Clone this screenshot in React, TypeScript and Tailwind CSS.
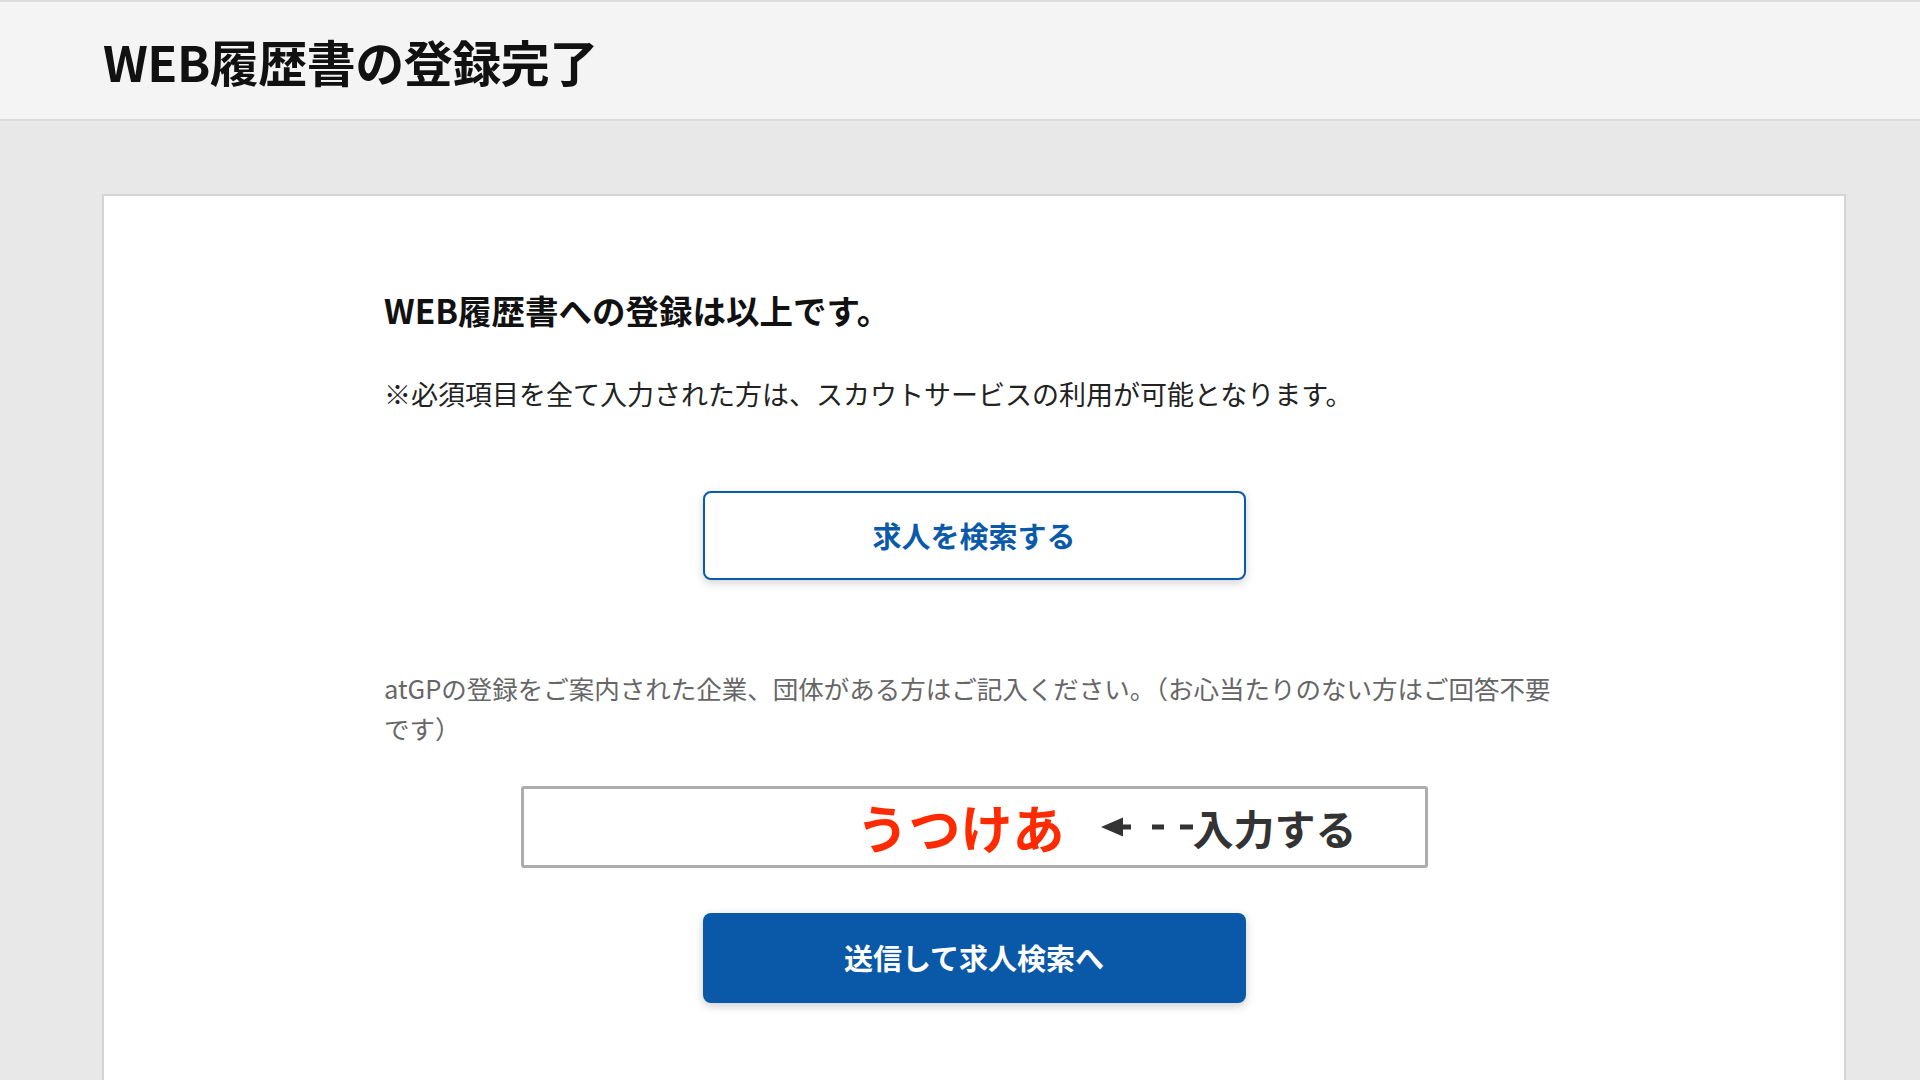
import React from 'react';

const font = { fontFamily: '"Noto Sans CJK JP", "Noto Sans", sans-serif' };

// dashed arrow used as the hand-written note next to the input
const DashedArrow: React.FC = () => (
  <svg width="92" height="20" viewBox="0 0 92 20" className="shrink-0">
    <path d="M0 10 L22 0.5 L22 19.5 Z" fill="#333" />
    <rect x="21" y="7.5" width="9" height="5" fill="#333" />
    <rect x="51" y="7.5" width="12" height="5" fill="#333" />
    <rect x="79" y="7.5" width="13" height="5" fill="#333" />
  </svg>
);

export default function App() {
  return (
    <div className="min-h-screen bg-[#e8e8e8]" style={font}>
      <header className="h-[121px] bg-[#f4f4f4] border-t-2 border-b-2 border-[#dcdcdc] flex items-center pl-[103px]">
        <h1 className="text-[49px] font-bold text-[#111] leading-none tracking-[-0.5px]">WEB履歴書の登録完了</h1>
      </header>

      <main className="pt-[73px]">
        <section className="ml-[102px] w-[1744px] bg-white border-2 border-[#d4d4d4] border-b-0 pb-[100px]">
          <div className="max-w-[1180px] mx-auto pt-[90px]">
            <h2 className="text-[33.5px] font-bold text-[#111] leading-[48px]">WEB履歴書への登録は以上です。</h2>
            <p className="mt-[40px] text-[27px] text-[#222] leading-[40px]">
              ※必須項目を全て入力された方は、スカウトサービスの利用が可能となります。
            </p>

            <button className="mt-[77px] mx-auto flex items-center justify-center w-[543px] h-[89px] rounded-[8px] border-2 border-[#0b5aa9] bg-white shadow-[0_3px_10px_rgba(0,0,0,0.18)] text-[29px] font-bold text-[#0b5aa9]">
              求人を検索する
            </button>

            <p className="mt-[88px] text-[25.5px] text-[#666] leading-[40px] w-[1178px]">
              atGPの登録をご案内された企業、団体がある方はご記入ください。（お心当たりのない方はご回答不要です）
            </p>

            <div className="mt-[38px] mx-auto w-[907px] h-[82px] border-[3px] border-[#adadad] rounded-[3px] flex items-center pl-[333px]">
              <span className="text-[52px] font-bold text-[#ff2a00] leading-none">うつけあ</span>
              <span className="ml-[36px] flex items-center text-[41px] font-bold text-[#333] leading-none">
                <DashedArrow />
                <span>入力する</span>
              </span>
            </div>

            <button className="mt-[45px] mx-auto flex items-center justify-center w-[543px] h-[90px] rounded-[8px] bg-[#0a58a8] shadow-[0_3px_10px_rgba(0,0,0,0.2)] text-[29px] font-bold text-white">
              送信して求人検索へ
            </button>
          </div>
        </section>
      </main>
    </div>
  );
}
